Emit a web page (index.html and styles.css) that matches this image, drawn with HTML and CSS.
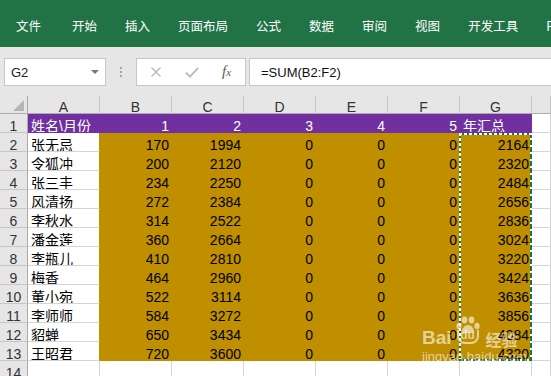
FILE: index.html
```html
<!DOCTYPE html>
<html lang="zh-CN">

<head>
    <meta charset="UTF-8">
    <title>年汇总 - Excel</title>
    <link rel="stylesheet" href="styles.css">
</head>

<body>
    <div class="ribbon">
        <span class="tab first">文件</span>
        <span class="tab">开始</span>
        <span class="tab">插入</span>
        <span class="tab">页面布局</span>
        <span class="tab">公式</span>
        <span class="tab">数据</span>
        <span class="tab">审阅</span>
        <span class="tab">视图</span>
        <span class="tab">开发工具</span>
        <span class="tab">PowerPivot</span>
    </div>

    <div class="toolbar">
        <div class="namebox">
            <span>G2</span>
            <span class="arrow"></span>
        </div>
        <div class="grip"><i></i><i></i><i></i></div>
        <div class="fnbox">
            <svg class="ico" width="12" height="10" viewBox="0 0 12 10">
                <path d="M1.5 0.5 L10.5 9.5 M10.5 0.5 L1.5 9.5" stroke="#b9b9b9" stroke-width="1.4" fill="none" />
            </svg>
            <svg class="ico" width="14" height="11" viewBox="0 0 14 11">
                <path d="M0.8 5.6 L5 9.6 L13.2 0.8" stroke="#b9b9b9" stroke-width="1.8" fill="none" />
            </svg>
            <span class="fx">f<small>x</small></span>
        </div>
        <div class="formula">=SUM(B2:F2)</div>
    </div>

    <div class="sheet">
        <!-- column headers -->
        <div class="corner"><span class="tri"></span></div>
        <div class="colhd">A</div><div class="colhd">B</div><div class="colhd">C</div><div class="colhd">D</div>
        <div class="colhd">E</div><div class="colhd">F</div><div class="colhd">G</div><div class="colhd"></div>

        <div class="rowhd">1</div>
        <div class="cell purple">姓名\月份</div>
        <div class="cell purple num">1</div><div class="cell purple num">2</div><div class="cell purple num">3</div>
        <div class="cell purple num">4</div><div class="cell purple num">5</div>
        <div class="cell purple">年汇总</div><div class="cell"></div>

        <div class="rowhd">2</div><div class="cell name">张无忌</div>
        <div class="cell gold num">170</div><div class="cell gold num">1994</div><div class="cell gold num">0</div><div class="cell gold num">0</div><div class="cell gold num">0</div><div class="cell gold num">2164</div><div class="cell"></div>
        <div class="rowhd">3</div><div class="cell name">令狐冲</div>
        <div class="cell gold num">200</div><div class="cell gold num">2120</div><div class="cell gold num">0</div><div class="cell gold num">0</div><div class="cell gold num">0</div><div class="cell gold num">2320</div><div class="cell"></div>
        <div class="rowhd">4</div><div class="cell name">张三丰</div>
        <div class="cell gold num">234</div><div class="cell gold num">2250</div><div class="cell gold num">0</div><div class="cell gold num">0</div><div class="cell gold num">0</div><div class="cell gold num">2484</div><div class="cell"></div>
        <div class="rowhd">5</div><div class="cell name">风清扬</div>
        <div class="cell gold num">272</div><div class="cell gold num">2384</div><div class="cell gold num">0</div><div class="cell gold num">0</div><div class="cell gold num">0</div><div class="cell gold num">2656</div><div class="cell"></div>
        <div class="rowhd">6</div><div class="cell name">李秋水</div>
        <div class="cell gold num">314</div><div class="cell gold num">2522</div><div class="cell gold num">0</div><div class="cell gold num">0</div><div class="cell gold num">0</div><div class="cell gold num">2836</div><div class="cell"></div>
        <div class="rowhd">7</div><div class="cell name">潘金莲</div>
        <div class="cell gold num">360</div><div class="cell gold num">2664</div><div class="cell gold num">0</div><div class="cell gold num">0</div><div class="cell gold num">0</div><div class="cell gold num">3024</div><div class="cell"></div>
        <div class="rowhd">8</div><div class="cell name">李瓶儿</div>
        <div class="cell gold num">410</div><div class="cell gold num">2810</div><div class="cell gold num">0</div><div class="cell gold num">0</div><div class="cell gold num">0</div><div class="cell gold num">3220</div><div class="cell"></div>
        <div class="rowhd">9</div><div class="cell name">梅香</div>
        <div class="cell gold num">464</div><div class="cell gold num">2960</div><div class="cell gold num">0</div><div class="cell gold num">0</div><div class="cell gold num">0</div><div class="cell gold num">3424</div><div class="cell"></div>
        <div class="rowhd">10</div><div class="cell name">董小宛</div>
        <div class="cell gold num">522</div><div class="cell gold num">3114</div><div class="cell gold num">0</div><div class="cell gold num">0</div><div class="cell gold num">0</div><div class="cell gold num">3636</div><div class="cell"></div>
        <div class="rowhd">11</div><div class="cell name">李师师</div>
        <div class="cell gold num">584</div><div class="cell gold num">3272</div><div class="cell gold num">0</div><div class="cell gold num">0</div><div class="cell gold num">0</div><div class="cell gold num">3856</div><div class="cell"></div>
        <div class="rowhd">12</div><div class="cell name">貂蝉</div>
        <div class="cell gold num">650</div><div class="cell gold num">3434</div><div class="cell gold num">0</div><div class="cell gold num">0</div><div class="cell gold num">0</div><div class="cell gold num">4084</div><div class="cell"></div>
        <div class="rowhd">13</div><div class="cell name">王昭君</div>
        <div class="cell gold num">720</div><div class="cell gold num">3600</div><div class="cell gold num">0</div><div class="cell gold num">0</div><div class="cell gold num">0</div><div class="cell gold num">4320</div><div class="cell"></div>

        <div class="rowhd">14</div>
        <div class="cell"></div><div class="cell"></div><div class="cell"></div><div class="cell"></div>
        <div class="cell"></div><div class="cell"></div><div class="cell"></div><div class="cell"></div>

        <!-- copy range G2:G13 -->
        <div class="ants"></div>

        <!-- watermark -->
        <div class="watermark">
            <div class="wm-logo">
                <span class="wm-bai">Bai</span>
                <span class="wm-du">
                    <svg class="paw" width="26" height="18" viewBox="0 0 26 18">
                        <ellipse cx="4" cy="10" rx="2.6" ry="3.2" />
                        <ellipse cx="9.5" cy="4" rx="2.8" ry="3.4" />
                        <ellipse cx="16.5" cy="4" rx="2.8" ry="3.4" />
                        <ellipse cx="22" cy="10" rx="2.6" ry="3.2" />
                        <path d="M13 9 C9 9 6 14 7 17 L19 17 C20 14 17 9 13 9 Z" />
                    </svg>
                    <span class="du">du</span>
                </span>
                <span class="wm-jy">经验</span>
            </div>
            <div class="wm-url">jingyan.baidu.com</div>
        </div>
    </div>
</body>

</html>
```

FILE: styles.css
```css
body {
    margin: 0;
    width: 551px;
    height: 376px;
    overflow: hidden;
    background: #fff;
    font-family: "Liberation Sans", "Noto Sans CJK SC", sans-serif;
}

/* ribbon tabs */
.ribbon {
    height: 47px;
    box-sizing: border-box;
    padding: 3px 0 0 16px;
    background: #217346;
    display: flex;
    align-items: center;
    gap: 28px;
    color: #fff;
    font-family: "Noto Sans CJK SC", sans-serif;
    font-size: 12.5px;
    white-space: nowrap;
}

.ribbon .first {
    margin-right: 3px;
}

/* name box + formula bar */
.toolbar {
    height: 49px;
    box-sizing: border-box;
    padding: 11px 0 0 4px;
    background: #e6e6e6;
    display: flex;
    align-items: flex-start;
}

.namebox {
    width: 102px;
    height: 28px;
    box-sizing: border-box;
    border: 1px solid #c6c6c6;
    background: #fff;
    display: flex;
    align-items: center;
    justify-content: space-between;
    padding: 0 6px 0 6px;
    font-size: 13px;
    color: #222;
}

.namebox .arrow {
    width: 0;
    height: 0;
    border-top: 4px solid #777;
    border-left: 4px solid transparent;
    border-right: 4px solid transparent;
}

.grip {
    margin: 9px 0 0 14px;
    display: flex;
    flex-direction: column;
    gap: 2px;
}

.grip i {
    width: 2px;
    height: 2px;
    background: #a6a6a6;
}

.fnbox {
    margin-left: 14px;
    width: 110px;
    height: 28px;
    box-sizing: border-box;
    border: 1px solid #c6c6c6;
    background: #fff;
    display: flex;
    align-items: center;
    padding-left: 13px;
}

.fnbox .ico + .ico {
    margin-left: 23px;
}

.fx {
    margin-left: 23px;
    font-family: "Liberation Serif", serif;
    font-style: italic;
    font-size: 15px;
    color: #5a5a5a;
    margin-top: -2px;
}

.fx small {
    font-size: 11px;
}

.formula {
    margin-left: 3px;
    flex: 1;
    height: 28px;
    box-sizing: border-box;
    border: 1px solid #c6c6c6;
    border-right: none;
    background: #fff;
    padding: 6px 0 0 11px;
    font-size: 13px;
    color: #111;
}

/* worksheet grid */
.sheet {
    position: relative;
    display: grid;
    grid-template-columns: 28px repeat(7, 72px) 1fr;
    grid-template-rows: 18px repeat(14, 19px);
}

.corner,
.colhd,
.rowhd {
    box-sizing: border-box;
    background: #e6e6e6;
    color: #333;
    font-size: 14px;
    line-height: 14px;
    text-align: center;
}

.corner {
    border-right: 1px solid #ababab;
    border-bottom: 1px solid #ababab;
    display: flex;
    align-items: flex-end;
    justify-content: flex-end;
    padding: 0 3px 2px 0;
}

.corner .tri {
    width: 0;
    height: 0;
    border-bottom: 11px solid #b5b5b5;
    border-left: 11px solid transparent;
}

.colhd {
    border-right: 1px solid #c6c6c6;
    border-bottom: 1px solid #ababab;
    padding-top: 4px;
}

.rowhd {
    border-right: 1px solid #ababab;
    border-bottom: 1px solid #c6c6c6;
    padding-top: 5px;
}

.cell {
    box-sizing: border-box;
    border-right: 1px solid #d4d4d4;
    border-bottom: 1px solid #d4d4d4;
    padding: 5px 2px 0 3px;
    font-size: 14px;
    line-height: 14px;
    white-space: nowrap;
    overflow: hidden;
    color: #000;
}

.num {
    text-align: right;
}

.name {
    border-right-color: #bf8f00;
}

.purple {
    background: #7030a0;
    border-color: #7030a0;
    color: #fff;
}

.gold {
    background: #bf8f00;
    border-color: #bf8f00;
}

/* marching ants around the copied range */
.ants {
    position: absolute;
    left: 459px;
    top: 37px;
    width: 73px;
    height: 228px;
    background:
        repeating-linear-gradient(90deg, #fff 0 3px, #217346 3px 5px) top / 100% 2px no-repeat,
        repeating-linear-gradient(90deg, #217346 0 5px, #fff 5px 7px) bottom / 100% 2px no-repeat,
        repeating-linear-gradient(180deg, #fff 0 3px, #217346 3px 5px) left / 2px 100% no-repeat,
        repeating-linear-gradient(180deg, #217346 0 5px, #fff 5px 7px) right / 2px 100% no-repeat;
}

.watermark {
    position: absolute;
    left: 422px;
    top: 220px;
    color: rgba(255, 255, 255, 0.6);
}

.wm-logo {
    display: flex;
    align-items: flex-end;
    height: 32px;
}

.wm-bai {
    font-size: 19px;
    font-weight: bold;
    line-height: 18px;
    margin-bottom: 1px;
}

.wm-du {
    position: relative;
    width: 28px;
    height: 32px;
    margin-left: 2px;
    display: flex;
    flex-direction: column;
    align-items: center;
}

.paw {
    fill: rgba(255, 255, 255, 0.6);
}

.wm-du .du {
    margin-top: -4px;
    width: 22px;
    height: 14px;
    box-sizing: border-box;
    border: 2px solid rgba(255, 255, 255, 0.6);
    border-top: none;
    border-radius: 0 0 8px 8px;
    font-size: 12px;
    font-weight: bold;
    line-height: 11px;
    text-align: center;
}

.wm-jy {
    margin-left: 4px;
    font-family: "Noto Sans CJK SC", sans-serif;
    font-size: 16px;
    font-weight: bold;
    line-height: 18px;
}

.wm-url {
    margin-top: 2px;
    font-size: 13px;
    line-height: 14px;
}
```
